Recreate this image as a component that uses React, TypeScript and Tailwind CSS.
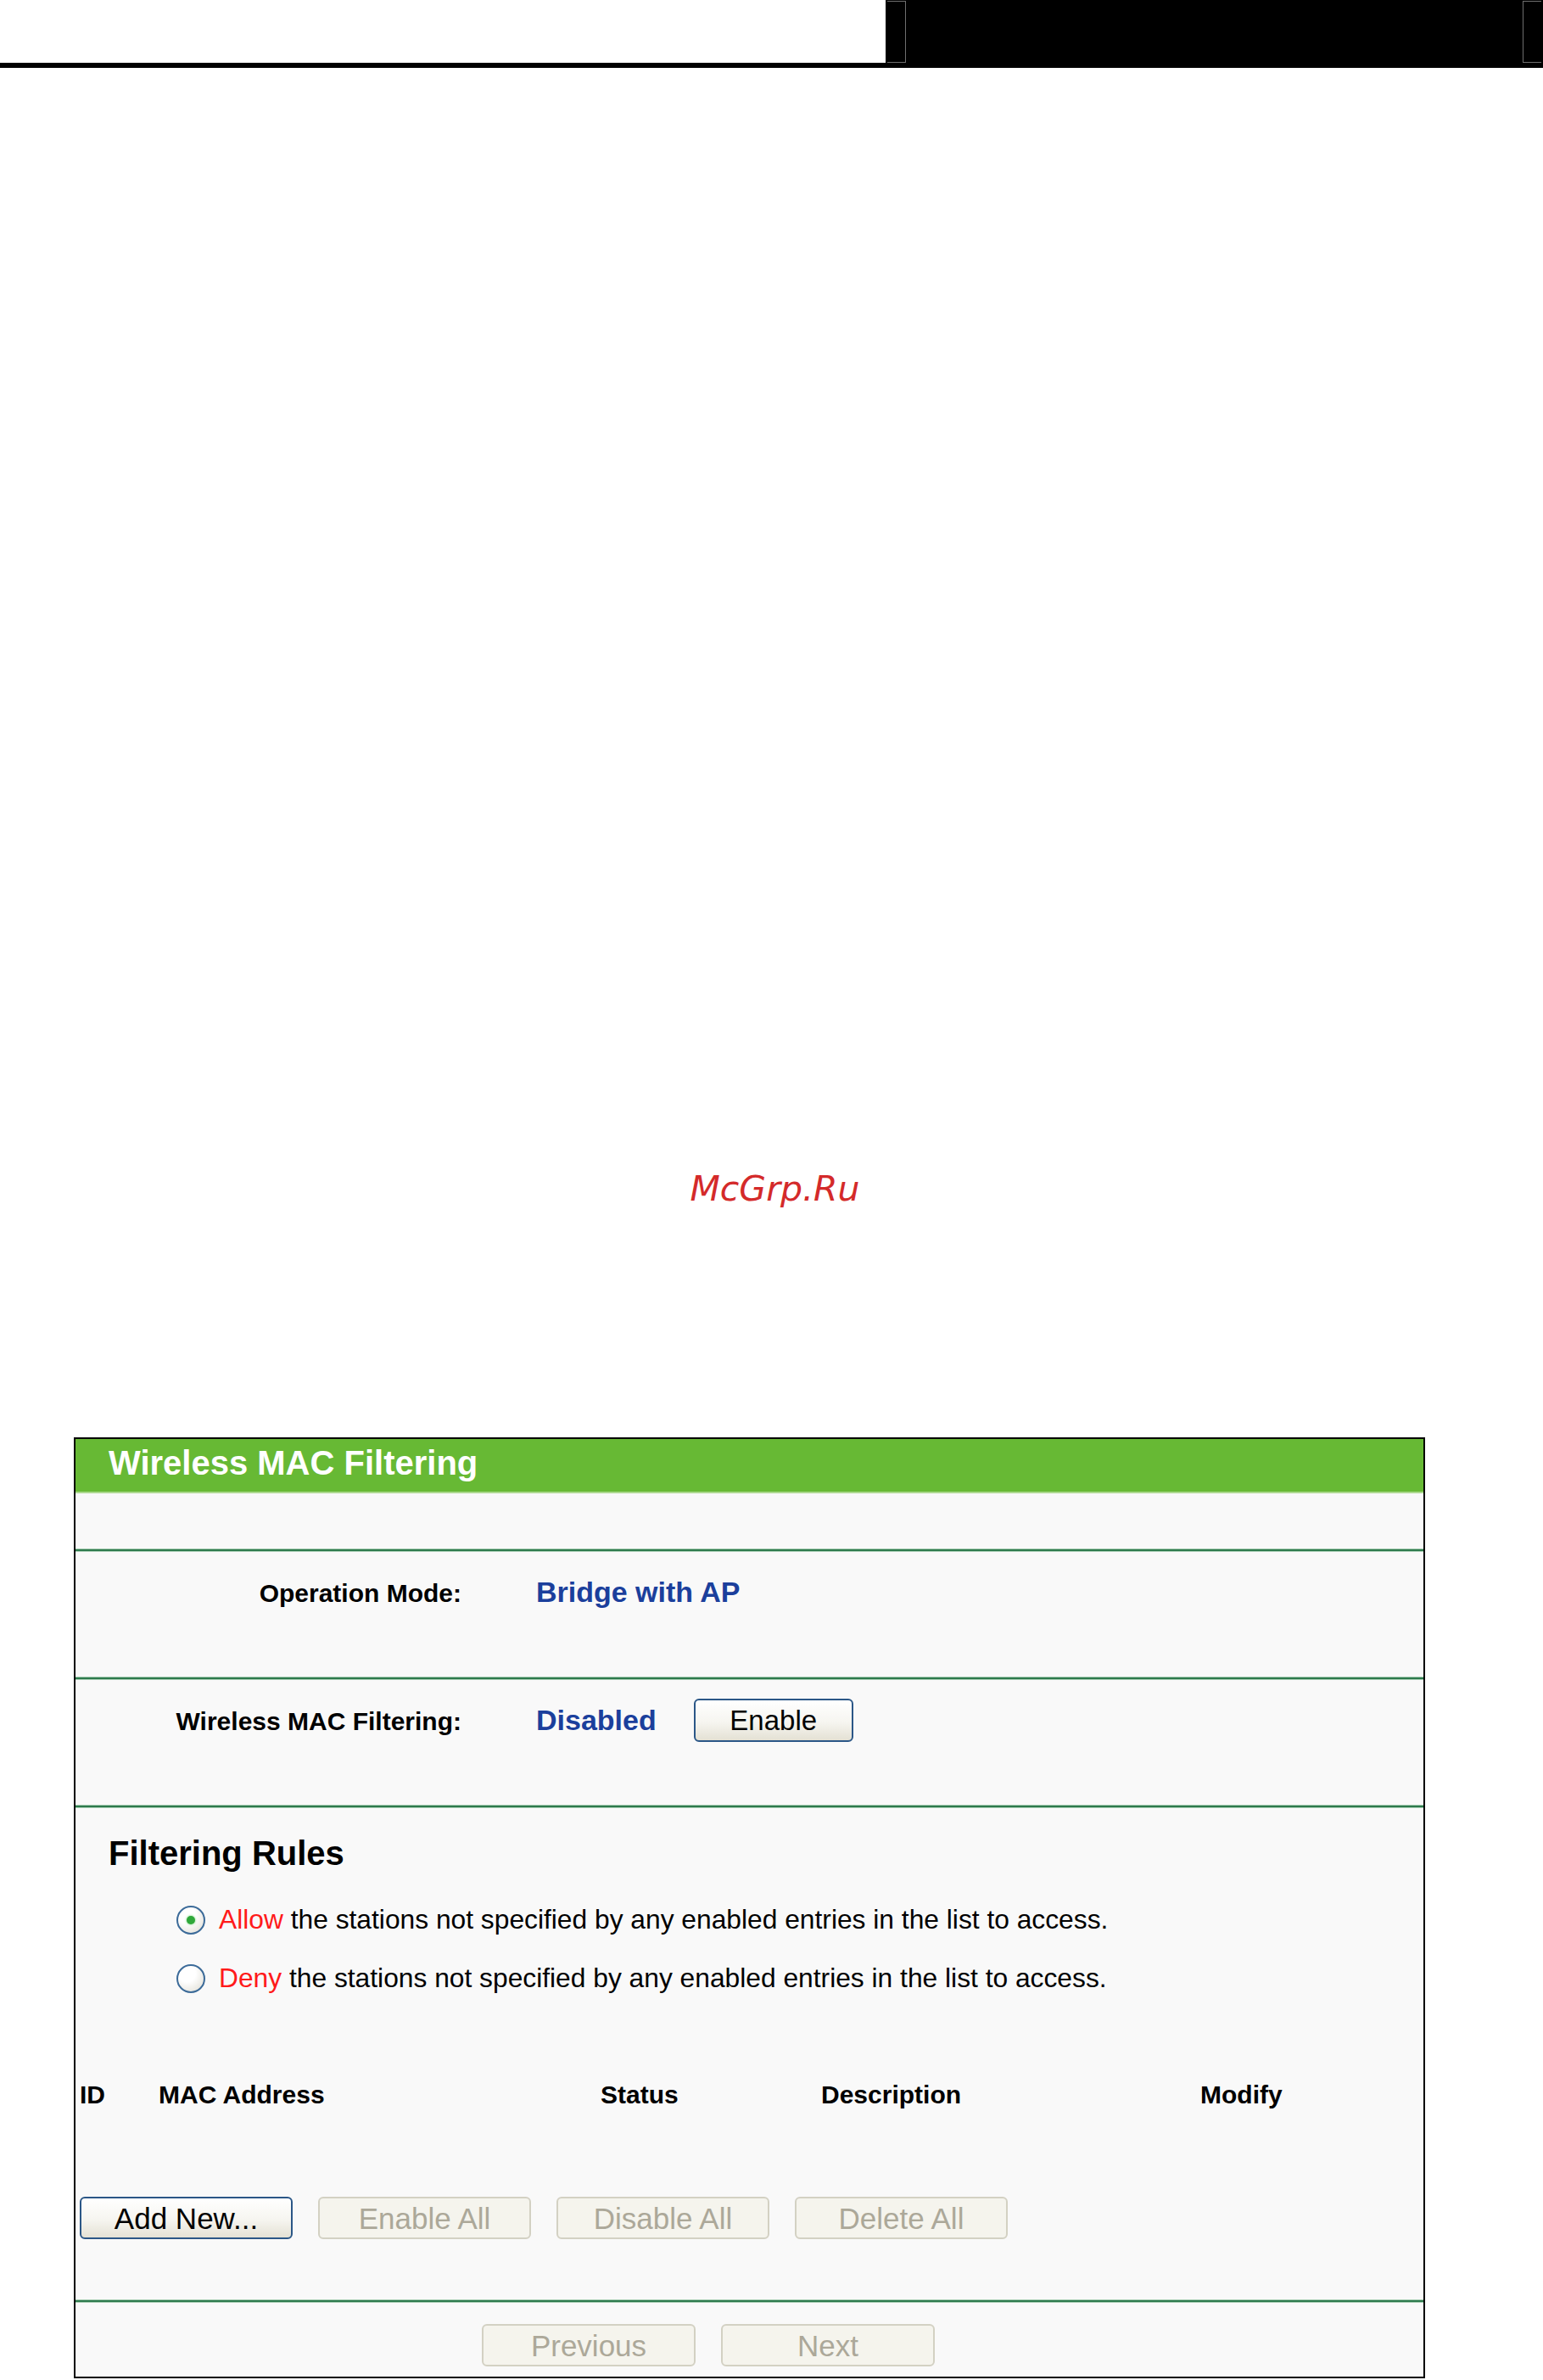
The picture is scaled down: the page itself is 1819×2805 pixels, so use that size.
import clsx from 'clsx';

function Btn({ label, disabled, className }: { label: string; disabled?: boolean; className?: string }) {
  return (
    <button
      disabled={disabled}
      className={clsx(
        'flex items-center justify-center rounded-[6px] border-2 leading-none',
        disabled
          ? 'border-[#d3d1c3] bg-[#f5f4ed] text-[#aca899]'
          : 'border-[#2b5787] bg-[linear-gradient(#ffffff,#f6f5f0_55%,#e4e1d4)] text-black',
        className,
      )}
    >
      {label}
    </button>
  );
}

function Radio({ checked }: { checked?: boolean }) {
  return (
    <span className="flex h-[34px] w-[34px] shrink-0 items-center justify-center rounded-full border-2 border-[#3c6b99] bg-[radial-gradient(circle_at_35%_30%,#ffffff_35%,#dcdad0)]">
      {checked && <span className="h-[10px] w-[10px] rounded-full bg-[#2fa83a] shadow-[0_0_3px_#79d679]" />}
    </span>
  );
}

function Divider() {
  return <div className="h-[4px] border-y border-[#a7cdb3] bg-[#2e7a4d]" />;
}

export default function App() {
  return (
    <div className="h-[2805px] w-[1819px] overflow-hidden bg-white font-['Liberation_Sans',Arial,sans-serif] text-black">
      {/* page top bar */}
      <div className="flex h-[80px] border-b-[6px] border-black">
        <div className="flex-1" />
        <div className="flex w-[775px] justify-between bg-black px-[2px] pt-[1px]">
          <div className="h-[73px] w-[22px] border-y border-r border-[#6e6e6e]" />
          <div className="h-[73px] w-[22px] border-y border-l border-[#6e6e6e]" />
        </div>
      </div>

      <div className="mt-[1301px] h-[40px] pl-[8px] text-center font-['DejaVu_Sans',sans-serif] text-[41px] italic leading-none text-[#d42a2a]">
        McGrp.Ru
      </div>

      {/* router panel */}
      <div className="ml-[87px] mt-[273px] w-[1593px] border-2 border-black bg-[#f9f9f9]">
        <div className="h-[64px] border-b-2 border-[#acd98f] bg-[#67b934] pl-[39px] pt-[8px] text-[40px] font-bold leading-[40px] text-white">
          Wireless MAC Filtering
        </div>
        <div className="h-[65px]" />
        <Divider />

        <div className="flex h-[147px] items-baseline pt-[30px]">
          <div className="w-[455px] text-right text-[30px] font-bold leading-none">Operation Mode:</div>
          <div className="ml-[88px] text-[34px] font-bold leading-none text-[#1b3f9c]">Bridge with AP</div>
        </div>
        <Divider />

        <div className="flex h-[147px] items-baseline pt-[22px]">
          <div className="w-[455px] text-right text-[30px] font-bold leading-none">Wireless MAC Filtering:</div>
          <div className="ml-[88px] text-[34px] font-bold leading-none text-[#1b3f9c]">Disabled</div>
          <Btn label="Enable" className="ml-[44px] h-[51px] w-[188px] text-[33px]" />
        </div>
        <Divider />

        <div className="h-[579px] pt-[34px]">
          <div className="pl-[39px] text-[40px] font-bold leading-[39px]">Filtering Rules</div>

          <div className="mt-[42px] flex h-[34px] items-center pl-[119px] text-[31.75px] leading-none">
            <Radio checked />
            <span className="ml-[16px]">
              <span className="text-[#ff1a1a]">Allow</span> the stations not specified by any enabled entries in the list to access.
            </span>
          </div>
          <div className="mt-[35px] flex h-[34px] items-center pl-[119px] text-[31.75px] leading-none">
            <Radio />
            <span className="ml-[16px]">
              <span className="text-[#ff1a1a]">Deny</span> the stations not specified by any enabled entries in the list to access.
            </span>
          </div>

          <div className="mt-[105px] grid grid-cols-[93px_521px_260px_447px_1fr] pl-[5px] text-[30px] font-bold leading-none">
            <div>ID</div>
            <div>MAC Address</div>
            <div>Status</div>
            <div>Description</div>
            <div>Modify</div>
          </div>

          <div className="mt-[105px] flex gap-[30px] pl-[5px] text-[35px]">
            <Btn label="Add New..." className="h-[50px] w-[251px]" />
            <Btn label="Enable All" disabled className="h-[50px] w-[251px]" />
            <Btn label="Disable All" disabled className="h-[50px] w-[251px]" />
            <Btn label="Delete All" disabled className="h-[50px] w-[251px]" />
          </div>
        </div>
        <Divider />

        <div className="flex h-[87px] gap-[30px] pl-[479px] pt-[25px] text-[35px]">
          <Btn label="Previous" disabled className="h-[50px] w-[252px]" />
          <Btn label="Next" disabled className="h-[50px] w-[252px]" />
        </div>
      </div>
    </div>
  );
}
